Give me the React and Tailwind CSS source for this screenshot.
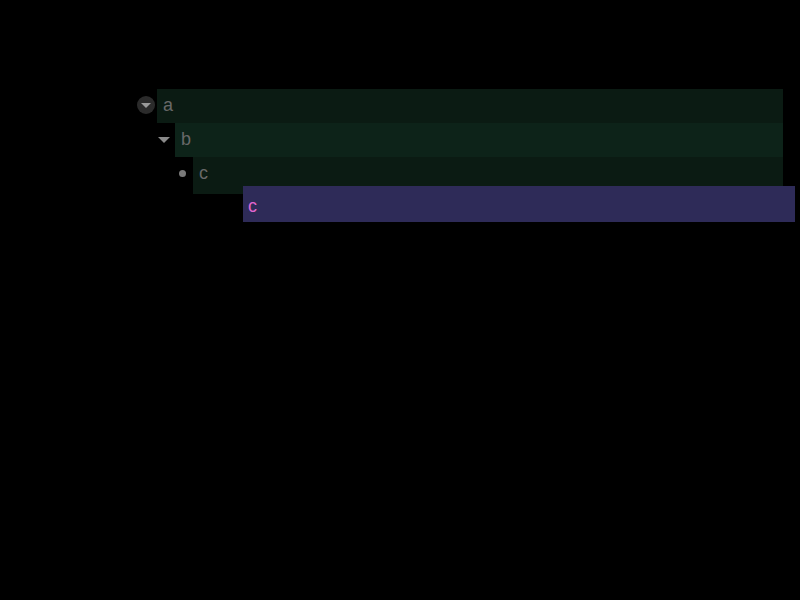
import React from 'react'

const rows = [
    { label: 'a', level: 0, kind: 'circle', bg: 'bg-[#0b1b13]' },
    { label: 'b', level: 1, kind: 'caret', bg: 'bg-[#0d2319]' },
    { label: 'c', level: 2, kind: 'dot', bg: 'bg-[#0b1b13]' },
]

const indents = ['ml-[137px]', 'ml-[155px]', 'ml-[173px]']

const Bullet = ({ kind }) => {
    if (kind === 'circle') {
        return (
            <div className="w-[18px] h-[18px] rounded-full bg-[#2b2b2b] flex items-center justify-center">
                <div className="w-0 h-0 border-l-[5px] border-r-[5px] border-t-[5px] border-l-transparent border-r-transparent border-t-[#9a9a9a] mt-[1px]"></div>
            </div>
        )
    }
    if (kind === 'caret') {
        return (
            <div className="w-0 h-0 border-l-[6px] border-r-[6px] border-t-[6px] border-l-transparent border-r-transparent border-t-[#8a8a8a] mt-[2px]"></div>
        )
    }
    return <div className="w-[7px] h-[7px] rounded-full bg-[#7a7a7a] mt-[1px]"></div>
}

export default function App() {
    return (
        <div className="w-[800px] h-[600px] bg-black relative" style={{ fontFamily: '"Liberation Sans", Arial, sans-serif' }}>
            <div className="pt-[89px] w-[783px] flex flex-col">
                {rows.map((r) => (
                    <div key={r.level} className={`flex ${indents[r.level]}`}>
                        <div className="w-[18px] mr-[2px] h-[32px] flex items-center justify-center shrink-0">
                            <Bullet kind={r.kind} />
                        </div>
                        <div className={`flex-1 ${r.bg} ${r.level === 2 ? 'h-[37px]' : 'h-[34px]'}`}>
                            <div className="h-[32px] flex items-center px-[6px] text-[18px] text-[#686868]">
                                {r.label}
                            </div>
                        </div>
                    </div>
                ))}
            </div>
            <div className="absolute left-[243px] top-[186px] w-[552px] h-[36px] bg-[#2e2b58] flex items-center px-[5px] pt-[4px] text-[18px] text-[#e066cf]">
                c
            </div>
        </div>
    )
}
